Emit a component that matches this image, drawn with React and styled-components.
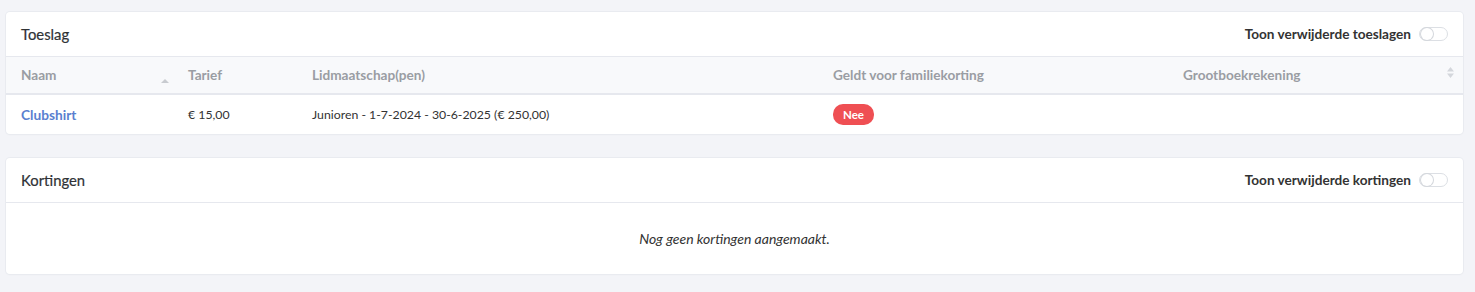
import React from "react";
import styled, { createGlobalStyle } from "styled-components";

const Global = createGlobalStyle`
  html, body { margin: 0; padding: 0; background: #f3f4f8; }
  body { font-family: Lato, "Noto Sans", sans-serif; font-size: 13px; color: #333; }
`;

const Page = styled.div`
  padding: 12px 12px 18px 6px;
  display: flex;
  flex-direction: column;
  gap: 24px;
`;

const Card = styled.section`
  background: #fff;
  border-radius: 4px;
  box-shadow: 0 0 0 1px #e9ebf0, 0 1px 2px rgba(0,0,0,0.04);
  overflow: hidden;
`;

const CardHeader = styled.header`
  height: 45px;
  box-sizing: border-box;
  padding: 0 15px;
  display: flex;
  align-items: center;
  justify-content: space-between;
  border-bottom: 1px solid #e6e8ee;
`;

const Title = styled.h3`
  margin: 0;
  font-size: 14.8px;
  font-weight: 400;
  color: #2f3236;
  -webkit-text-stroke: 0.2px #2f3236;
`;

const ToggleLabel = styled.label`
  display: flex;
  align-items: center;
  gap: 8px;
  font-size: 13.6px;
  font-weight: 700;
  color: #333;
`;

const Switch = styled.span`
  width: 29px;
  height: 14px;
  box-sizing: border-box;
  border: 1px solid #dcdfe4;
  border-radius: 8px;
  position: relative;
  background: #fff;
  &::after {
    content: "";
    position: absolute;
    left: 1px;
    top: 0px;
    width: 12px;
    height: 12px;
    border-radius: 50%;
    background: #fff;
    box-shadow: 0 0 0 1px #d4d7dc;
  }
`;

const Table = styled.table`
  width: 100%;
  border-collapse: collapse;
  table-layout: fixed;
`;

const Th = styled.th`
  height: 36px;
  padding: 0 15px;
  text-align: left;
  background: #f8f9fb;
  color: #9a9da3;
  font-weight: 700;
  font-size: 13.6px;
  border-bottom: 2px solid #e6e8ee;
  position: relative;
`;

const SortIcon = styled.svg`
  position: absolute;
  right: ${p => p.$right || 8}px;
  top: ${p => p.$top || 10}px;
`;

const Td = styled.td`
  height: 39px;
  padding: 0 15px;
  font-size: 12.3px;
  color: #333;
`;

const Link = styled.a`
  color: #5a7fd0;
  font-weight: 700;
  font-size: 13.7px;
  text-decoration: none;
`;

const Badge = styled.span`
  display: inline-block;
  background: #ef4f53;
  color: #fff;
  font-weight: 700;
  font-size: 11.5px;
  padding: 3px 10px;
  border-radius: 10px;
  line-height: 15px;
`;

const Empty = styled.div`
  height: 71px;
  display: flex;
  align-items: center;
  justify-content: center;
  font-style: italic;
  font-size: 14px;
  color: #333;
`;

export default function App() {
  return (
    <>
      <Global />
      <Page>
        <Card>
          <CardHeader>
            <Title>Toeslag</Title>
            <ToggleLabel>
              Toon verwijderde toeslagen <Switch />
            </ToggleLabel>
          </CardHeader>
          <Table>
            <colgroup>
              <col style={{ width: 167 }} />
              <col style={{ width: 124 }} />
              <col style={{ width: 521 }} />
              <col style={{ width: 350 }} />
              <col />
            </colgroup>
            <thead>
              <tr>
                <Th>
                  Naam
                  <SortIcon $right={4} $top={22} width="8" height="4" viewBox="0 0 8 4">
                    <path d="M0 4 L4 0 L8 4 Z" fill="#c8cbd0" />
                  </SortIcon>
                </Th>
                <Th>Tarief</Th>
                <Th>Lidmaatschap(pen)</Th>
                <Th>Geldt voor familiekorting</Th>
                <Th>
                  Grootboekrekening
                  <SortIcon $right={9} $top={10} width="7" height="11" viewBox="0 0 7 11">
                    <path d="M0 4.5 L3.5 0 L7 4.5 Z M0 6.5 L3.5 11 L7 6.5 Z" fill="#d4d7dc" />
                  </SortIcon>
                </Th>
              </tr>
            </thead>
            <tbody>
              <tr>
                <Td><Link href="#">Clubshirt</Link></Td>
                <Td>€ 15,00</Td>
                <Td>Junioren - 1-7-2024 - 30-6-2025 (€ 250,00)</Td>
                <Td><Badge>Nee</Badge></Td>
                <Td />
              </tr>
            </tbody>
          </Table>
        </Card>
        <Card>
          <CardHeader>
            <Title>Kortingen</Title>
            <ToggleLabel>
              Toon verwijderde kortingen <Switch />
            </ToggleLabel>
          </CardHeader>
          <Empty>Nog geen kortingen aangemaakt.</Empty>
        </Card>
      </Page>
    </>
  );
}
